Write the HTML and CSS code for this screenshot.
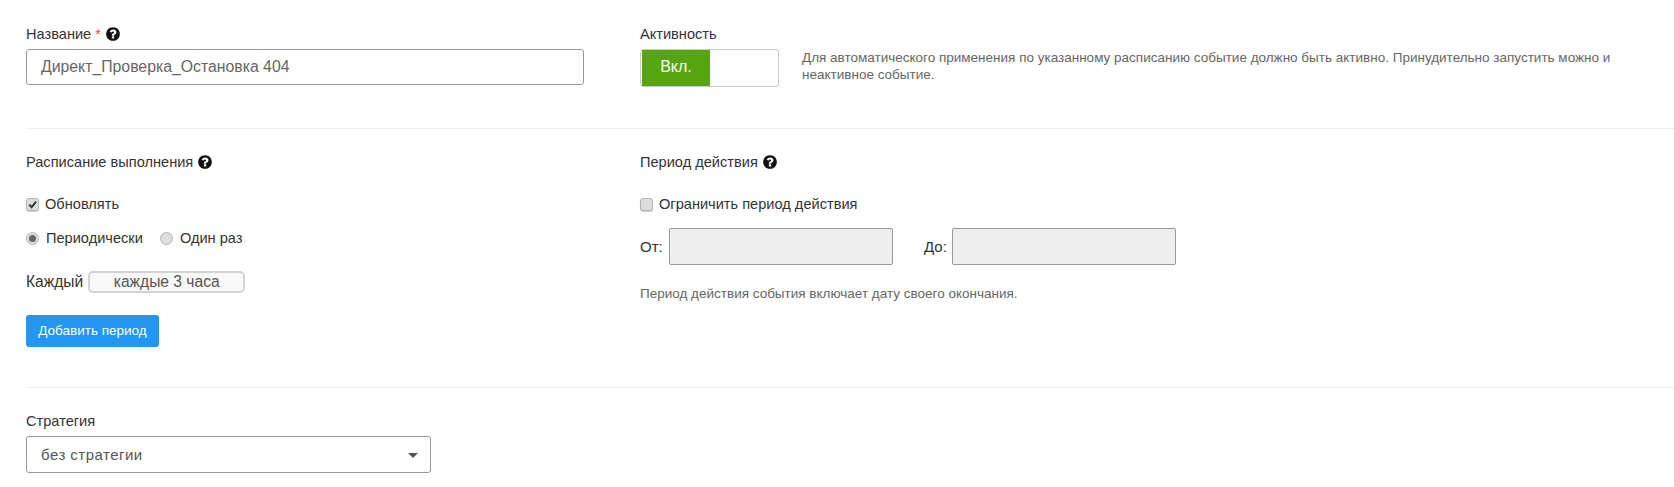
FILE: index.html
```html
<!DOCTYPE html>
<html lang="ru">
<head>
<meta charset="utf-8">
<title>Событие</title>
<link rel="stylesheet" href="styles.css">
</head>
<body>
<svg class="defs" width="0" height="0" aria-hidden="true"><symbol id="q" viewBox="0 0 1536 1792"><path d="M896 1376v-192q0-14-9-23t-23-9h-192q-14 0-23 9t-9 23v192q0 14 9 23t23 9h192q14 0 23-9t9-23zm256-672q0-88-55.5-163t-138.5-116-170-41q-243 0-371 213-15 24 8 42l132 100q7 6 19 6 16 0 25-12 53-68 86-92 34-24 86-24 48 0 85.5 26t37.5 59q0 38-20 61t-68 45q-63 28-115.5 86.5t-52.5 125.5v36q0 14 9 23t23 9h192q14 0 23-9t9-23q0-19 21.5-49.5t54.5-49.5q32-18 49-28.5t46-35 44.5-48 28-60.5 12.5-81zm384 192q0 209-103 385.5t-279.5 279.5-385.5 103-385.5-103-279.5-279.5-103-385.5 103-385.5 279.5-279.5 385.5-103 385.5 103 279.5 279.5 103 385.5z"/></symbol></svg>
<main class="page">
  <section class="row row-top">
    <div class="col-left">
      <div class="label">Название <span class="req">*</span> <svg class="help"><use href="#q"/></svg></div>
      <div class="field name-field">Директ_Проверка_Остановка 404</div>
    </div>
    <div class="col-right">
      <div class="label">Активность</div>
      <div class="active-line">
        <div class="toggle"><span class="toggle-on">Вкл.</span></div>
        <p class="hint hint-active">Для автоматического применения по указанному расписанию событие должно быть активно. Принудительно запустить можно и неактивное событие.</p>
      </div>
    </div>
  </section>
  <hr class="divider">
  <section class="row row-mid">
    <div class="col-left">
      <div class="label heading">Расписание выполнения <svg class="help"><use href="#q"/></svg></div>
      <div class="opt opt-check"><span class="box box-on"><svg viewBox="0 0 12 12"><path d="M2.5 6.2 5 9l4.8-6.2" fill="none" stroke="#333" stroke-width="2.2"/></svg></span>Обновлять</div>
      <div class="opt opt-radio">
        <span class="radio radio-on"></span><span class="radio-text">Периодически</span>
        <span class="radio"></span><span>Один раз</span>
      </div>
      <div class="every"><span>Каждый</span><span class="every-btn">каждые 3 часа</span></div>
      <button class="add-btn" type="button">Добавить период</button>
    </div>
    <div class="col-right">
      <div class="label heading">Период действия <svg class="help"><use href="#q"/></svg></div>
      <div class="opt opt-check"><span class="box"></span>Ограничить период действия</div>
      <div class="dates">
        <span class="date-label">От:</span><div class="date-input"></div>
        <span class="date-label date-to">До:</span><div class="date-input"></div>
      </div>
      <p class="hint hint-date">Период действия события включает дату своего окончания.</p>
    </div>
  </section>
  <hr class="divider">
  <section class="strategy">
    <div class="label">Стратегия</div>
    <div class="field select">без стратегии<span class="caret"></span></div>
  </section>
</main>
</body>
</html>
```
FILE: styles.css
```css
* { box-sizing: border-box; }
html, body { margin: 0; padding: 0; background: #fff; }
body {
  font-family: "Liberation Sans", Arial, sans-serif;
  font-size: 14.6px;
  line-height: 20px;
  color: #333;
  overflow: hidden;
}
.defs { position: absolute; }
.page { padding: 24px 0 0 26px; }
.row { display: flex; }
.col-left { width: 614px; flex: none; }
.col-right { flex: 1; min-width: 0; }
.label { height: 20px; margin-bottom: 5px; color: #333; }
.req { color: #d9534f; }
.help { width: 16px; height: 16px; vertical-align: -3px; fill: #111; margin-left: 0; }
.field {
  border: 1px solid #999;
  border-radius: 3px;
  padding: 0 14px;
  color: #666;
  font-size: 15.8px;
  height: 36px;
  line-height: 34px;
}
.name-field { width: 558px; }
.active-line { display: flex; }
.toggle {
  width: 139px; height: 38px;
  border: 1px solid #ccc; border-radius: 3px;
  padding: 0 1px; flex: none;
}
.toggle-on {
  display: block; width: 68px; height: 36px;
  background: #55a511; color: #fff;
  font-size: 16px; font-weight: 400; line-height: 34px; text-align: center;
}
.hint { margin: 0; font-size: 13.5px; line-height: 17px; color: #666; }
.hint-active { margin-left: 23px; padding-top: 0; max-width: 820px; }
.divider { border: 0; border-top: 1px solid #eee; margin: 0; }
.row-top { height: 104px; }
.row-mid { height: 258px; padding-top: 23px; }
.heading { margin-bottom: 22px; }
.opt { display: flex; align-items: center; height: 20px; }
.opt-check { margin-bottom: 14px; }
.box {
  width: 13px; height: 13px; margin-right: 6px;
  border: 1px solid #b5b5b5; border-radius: 3px;
  background: #ddd; box-shadow: 0 1px 1px rgba(0,0,0,.2);
  display: flex;
}
.box svg { width: 11px; height: 11px; }
.radio {
  width: 13px; height: 13px; margin-right: 7px; border-radius: 50%;
  border: 1px solid #b5b5b5; background: #ddd; position: relative;
}
.radio-on::after {
  content: ""; position: absolute; left: 2px; top: 2px;
  width: 7px; height: 7px; border-radius: 50%; background: #666;
}
.radio-text { margin-right: 17px; }
.every { display: flex; align-items: center; height: 22px; margin-top: 23px; font-size: 15.6px; gap: 5px; }
.every-btn {
  width: 157px; height: 22px; text-align: center;
  border: 2px solid #d3d3d3; border-radius: 5px; background: #f9f9f9;
  color: #555; font-size: 15.6px; line-height: 18px;
}
.add-btn {
  display: block; margin-top: 22px; width: 133px; height: 32px;
  background: #2196f3; color: #fff; border: 0; border-radius: 3px;
  font: 13.5px/32px "Liberation Sans", Arial, sans-serif; padding: 0;
}
.dates { display: flex; align-items: center; height: 37px; font-size: 15px; }
.date-label { width: 29px; flex: none; }
.date-to { width: 28px; margin-left: 31px; }
.date-input { width: 224px; height: 37px; background: #eee; border: 1px solid #999; border-radius: 2px; }
.hint-date { margin-top: 20px; }
.strategy { padding-top: 23px; }
.select { width: 405px; height: 37px; position: relative; line-height: 35px; font-size: 15px; letter-spacing: .47px; color: #555; }
.caret {
  position: absolute; right: 12px; top: 16px;
  border: 5px solid transparent; border-top-color: #555; border-bottom: 0;
}
```
